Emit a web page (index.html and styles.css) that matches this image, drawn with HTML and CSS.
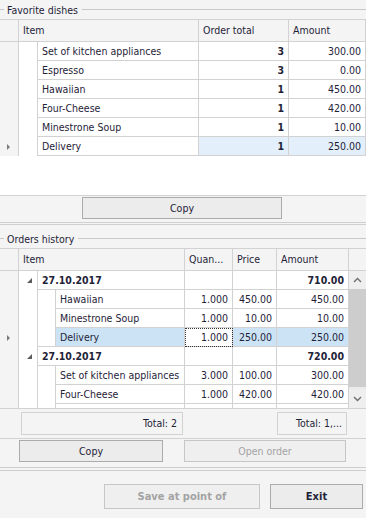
FILE: index.html
```html
<!DOCTYPE html>
<html lang="en">
<head>
    <meta charset="UTF-8">
    <title>Orders</title>
    <link rel="stylesheet" href="styles.css">
</head>
<body>

<div class="window">

    <!-- Favorite dishes -->
    <div class="caption"><span>Favorite dishes</span></div>
    <div class="grid fav">
        <div class="head">
            <div class="ind"></div>
            <div class="hcell f-item">Item</div>
            <div class="hcell f-total">Order total</div>
            <div class="hcell f-amount">Amount</div>
        </div>
        <div class="row">
            <div class="ind"></div><div class="indent"></div>
            <div class="cell f-name">Set of kitchen appliances</div>
            <div class="cell f-total num bold">3</div>
            <div class="cell f-amount num">300.00</div>
        </div>
        <div class="row">
            <div class="ind"></div><div class="indent"></div>
            <div class="cell f-name">Espresso</div>
            <div class="cell f-total num bold">3</div>
            <div class="cell f-amount num">0.00</div>
        </div>
        <div class="row">
            <div class="ind"></div><div class="indent"></div>
            <div class="cell f-name">Hawaiian</div>
            <div class="cell f-total num bold">1</div>
            <div class="cell f-amount num">450.00</div>
        </div>
        <div class="row">
            <div class="ind"></div><div class="indent"></div>
            <div class="cell f-name">Four-Cheese</div>
            <div class="cell f-total num bold">1</div>
            <div class="cell f-amount num">420.00</div>
        </div>
        <div class="row">
            <div class="ind"></div><div class="indent"></div>
            <div class="cell f-name">Minestrone Soup</div>
            <div class="cell f-total num bold">1</div>
            <div class="cell f-amount num">10.00</div>
        </div>
        <div class="row">
            <div class="ind"><span class="arrow"></span></div><div class="indent"></div>
            <div class="cell f-name">Delivery</div>
            <div class="cell f-total num bold sel-light">1</div>
            <div class="cell f-amount num sel-light">250.00</div>
        </div>
    </div>
    <div class="copy-row">
        <button class="btn copy-wide">Copy</button>
    </div>
    <div class="split"></div>

    <!-- Orders history -->
    <div class="caption second"><span>Orders history</span></div>
    <div class="grid hist">
        <div class="head">
            <div class="ind"></div>
            <div class="hcell h-item">Item</div>
            <div class="hcell h-qty">Quan...</div>
            <div class="hcell h-price">Price</div>
            <div class="hcell h-amount">Amount</div>
            <div class="hcell h-blank"></div>
        </div>
        <div class="body">
            <div class="rows">
                <div class="row">
                    <div class="ind"></div><div class="indent"><span class="expand"></span></div>
                    <div class="cell h-group bold">27.10.2017</div>
                    <div class="cell h-qty"></div>
                    <div class="cell h-price"></div>
                    <div class="cell h-amount num bold">710.00</div>
                </div>
                <div class="row">
                    <div class="ind"></div><div class="indent"></div><div class="indent2"></div>
                    <div class="cell h-name">Hawaiian</div>
                    <div class="cell h-qty num">1.000</div>
                    <div class="cell h-price num">450.00</div>
                    <div class="cell h-amount num">450.00</div>
                </div>
                <div class="row">
                    <div class="ind"></div><div class="indent"></div><div class="indent2"></div>
                    <div class="cell h-name">Minestrone Soup</div>
                    <div class="cell h-qty num">1.000</div>
                    <div class="cell h-price num">10.00</div>
                    <div class="cell h-amount num">10.00</div>
                </div>
                <div class="row">
                    <div class="ind"><span class="arrow"></span></div><div class="indent"></div><div class="indent2 last"></div>
                    <div class="cell h-name sel">Delivery</div>
                    <div class="cell h-qty num focus">1.000</div>
                    <div class="cell h-price num sel">250.00</div>
                    <div class="cell h-amount num sel">250.00</div>
                </div>
                <div class="row">
                    <div class="ind"></div><div class="indent"><span class="expand"></span></div>
                    <div class="cell h-group bold">27.10.2017</div>
                    <div class="cell h-qty"></div>
                    <div class="cell h-price"></div>
                    <div class="cell h-amount num bold">720.00</div>
                </div>
                <div class="row">
                    <div class="ind"></div><div class="indent"></div><div class="indent2"></div>
                    <div class="cell h-name">Set of kitchen appliances</div>
                    <div class="cell h-qty num">3.000</div>
                    <div class="cell h-price num">100.00</div>
                    <div class="cell h-amount num">300.00</div>
                </div>
                <div class="row">
                    <div class="ind"></div><div class="indent"></div><div class="indent2"></div>
                    <div class="cell h-name">Four-Cheese</div>
                    <div class="cell h-qty num">1.000</div>
                    <div class="cell h-price num">420.00</div>
                    <div class="cell h-amount num">420.00</div>
                </div>
                <!-- next row, scrolled out of view -->
                <div class="row">
                    <div class="ind"></div><div class="indent"></div><div class="indent2"></div>
                    <div class="cell h-name"></div>
                    <div class="cell h-qty"></div>
                    <div class="cell h-price"></div>
                    <div class="cell h-amount"></div>
                </div>
            </div>
            <div class="scroll">
                <div class="sbtn">
                    <svg width="9" height="6" viewBox="0 0 9 6"><polyline points="1,5 4.5,1.5 8,5" fill="none" stroke="#6f6f6f" stroke-width="1.4"/></svg>
                </div>
                <div class="thumb"></div>
                <div class="track"></div>
                <div class="sbtn">
                    <svg width="9" height="6" viewBox="0 0 9 6"><polyline points="1,1 4.5,4.5 8,1" fill="none" stroke="#6f6f6f" stroke-width="1.4"/></svg>
                </div>
            </div>
        </div>
        <div class="footer">
            <div class="total t-left">Total: 2</div>
            <div class="total t-right">Total: 1,...</div>
        </div>
    </div>
    <div class="hist-buttons">
        <button class="btn copy-small">Copy</button>
        <button class="btn open disabled">Open order</button>
    </div>
    <div class="split lower"></div>

    <div class="bottom">
        <button class="btn big disabled">Save at point of</button>
        <button class="btn big exit">Exit</button>
    </div>
</div>

</body>
</html>
```

FILE: styles.css
```css
* {
    box-sizing: border-box;
}

body {
    margin: 0;
    background-color: #f4f4f4;
    font-family: "DejaVu Sans Condensed", "DejaVu Sans", sans-serif;
    font-size: 10.5px;
    color: #1f2338;
}

.window {
    width: 366px;
    height: 518px;
    overflow: hidden;
}

/* group captions */
.caption {
    display: flex;
    align-items: center;
    height: 19px;
}

.caption::before {
    content: "";
    width: 4px;
    border-top: 1px solid #c9c9c9;
}

.caption::after {
    content: "";
    flex: 1;
    border-top: 1px solid #c9c9c9;
}

.caption span {
    padding: 0 4px 0 3px;
}

.caption.second {
    margin-top: 4px;
}

/* grids */
.grid {
    background-color: #fff;
    border-top: 1px solid #d2d2d2;
    border-bottom: 1px solid #d2d2d2;
}

.grid.fav {
    height: 177px;
}

.head {
    display: flex;
    height: 22px;
    background-color: #f4f4f4;
}

.head .ind {
    height: 22px;
    border-bottom: 1px solid #d2d2d2;
}

.hcell {
    height: 22px;
    line-height: 21px;
    padding: 0 4px;
    border-right: 1px solid #d2d2d2;
    border-bottom: 1px solid #d2d2d2;
    white-space: nowrap;
    overflow: hidden;
}

.row {
    display: flex;
    height: 19px;
}

.ind {
    width: 19px;
    flex: none;
    background-color: #f4f4f4;
    border-right: 1px solid #d2d2d2;
    display: flex;
    align-items: center;
    justify-content: center;
}

.indent {
    width: 19px;
    flex: none;
    border-right: 1px solid #d2d2d2;
    display: flex;
    align-items: center;
    justify-content: center;
}

.indent2 {
    width: 18px;
    flex: none;
    border-right: 1px solid #d2d2d2;
}

.indent2.last {
    border-bottom: 1px solid #d2d2d2;
}

.cell {
    flex: none;
    height: 19px;
    line-height: 18px;
    padding: 0 4px;
    border-right: 1px solid #d2d2d2;
    border-bottom: 1px solid #d2d2d2;
    white-space: nowrap;
    overflow: hidden;
}

.num {
    text-align: right;
}

.bold {
    font-weight: bold;
}

.sel-light {
    background-color: #e3effa;
}

.sel {
    background-color: #cce3f6;
}

.focus {
    outline: 1px dotted #333;
    outline-offset: -1px;
}

.arrow {
    width: 0;
    height: 0;
    border-left: 3px solid #7a7a7a;
    border-top: 3px solid transparent;
    border-bottom: 3px solid transparent;
    margin-left: -2px;
}

.expand {
    width: 0;
    height: 0;
    border-left: 5px solid transparent;
    border-bottom: 5px solid #5c5c5c;
    margin-left: 3px;
}

/* favorite dishes columns */
.f-item { width: 180px; }
.f-name { width: 161px; }
.f-total { width: 90px; }
.f-amount { width: 77px; }

/* orders history columns */
.h-item { width: 166px; }
.h-group { width: 147px; }
.h-name { width: 129px; }
.h-qty { width: 48px; }
.h-price { width: 44px; }
.h-amount { width: 72px; }
.h-blank { width: 17px; border-right: none; }

.body {
    display: flex;
    height: 138px;
    border-bottom: 1px solid #d2d2d2;
}

.rows {
    width: 349px;
    height: 137px;
    overflow: hidden;
}

.scroll {
    width: 17px;
    height: 137px;
    display: flex;
    flex-direction: column;
    background-color: #ebebeb;
}

.sbtn {
    height: 18px;
    display: flex;
    align-items: center;
    justify-content: center;
    background-color: #efefef;
}

.thumb {
    height: 98px;
    background-color: #cdcdcd;
}

.track {
    flex: 1;
}

.footer {
    display: flex;
    justify-content: space-between;
    height: 29px;
    padding: 3px 19px 3px 21px;
    background-color: #f4f4f4;
}

.total {
    height: 23px;
    line-height: 21px;
    border: 1px solid #d2d2d2;
    text-align: right;
    padding-right: 5px;
    white-space: nowrap;
    overflow: hidden;
}

.t-left { width: 162px; }
.t-right { width: 70px; padding-right: 4px; }

/* buttons */
.btn {
    font-family: inherit;
    font-size: 10.5px;
    color: #1f2338;
    background-color: #ececec;
    border: 1px solid #ababab;
    border-radius: 0;
    padding: 0;
    height: 22px;
}

.btn.disabled {
    color: #a3a3a3;
    border-color: #c6c6c6;
    background-color: #efefef;
}

.copy-row {
    height: 26px;
    padding: 1px 0 0 82px;
}

.copy-wide {
    width: 200px;
}

.split {
    height: 3px;
    border-top: 1px solid #cfcfcf;
    border-bottom: 1px solid #cfcfcf;
}

.hist-buttons {
    display: flex;
    gap: 21px;
    height: 28px;
    padding: 1px 0 0 19px;
}

.copy-small { width: 144px; }
.open { width: 162px; }

.split.lower {
    height: 4px;
}

.bottom {
    display: flex;
    justify-content: flex-end;
    gap: 10px;
    padding: 13px 3px 0 0;
}

.btn.big {
    height: 25px;
    font-weight: bold;
    font-size: 11px;
}

.btn.big.disabled { width: 156px; }
.btn.exit { width: 93px; }
```
